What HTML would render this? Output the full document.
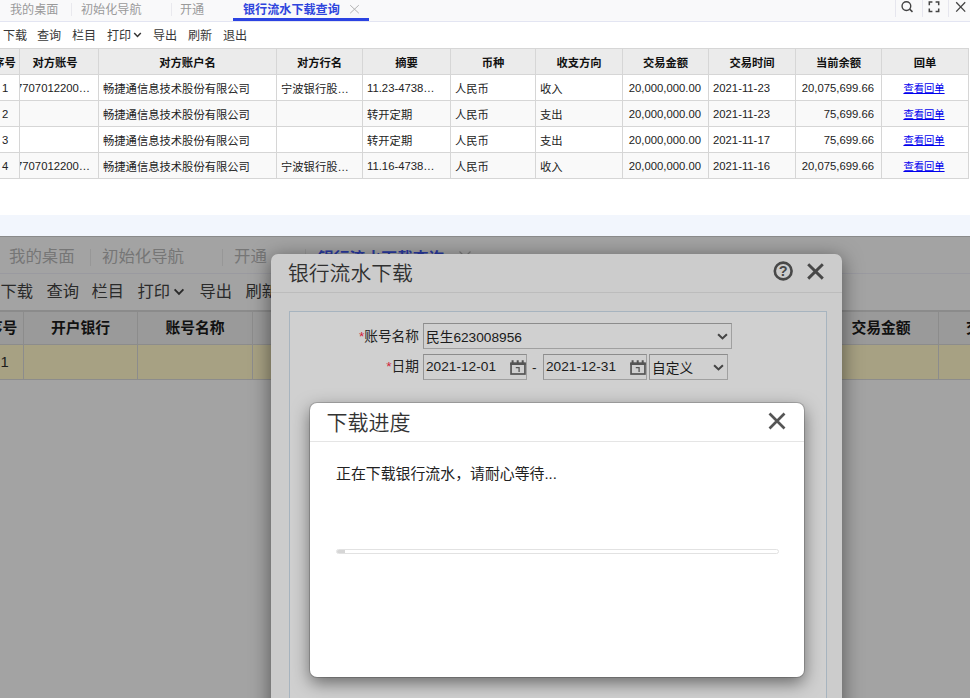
<!DOCTYPE html>
<html lang="zh-CN">
<head>
<meta charset="utf-8">
<title>银行流水下载查询</title>
<style>
*{box-sizing:border-box;margin:0;padding:0}
html,body{width:970px;height:698px;overflow:hidden;background:#fff}
body{position:relative;font-family:"Liberation Sans","Noto Sans CJK SC",sans-serif;color:#333}
.abs{position:absolute}
.t{position:absolute;white-space:nowrap;line-height:1}

/* ---------- top screenshot ---------- */
#top{position:absolute;left:0;top:0;width:970px;height:236px;background:#fff;overflow:hidden}
#top .tabbar{position:absolute;left:0;top:0;width:970px;height:22px;background:#f9f9fa;border-bottom:1px solid #e3e5f2}
#top .tab{position:absolute;top:4px;font-size:12.1px;line-height:12px;color:#9a9a9a;white-space:nowrap}
#top .tab.on{color:#2f45dd;font-weight:bold}
#top .sep{position:absolute;top:3px;width:1px;height:13px;background:#e9e9ee}
#top .uline{position:absolute;left:233px;top:18px;width:136px;height:3px;background:#2b43e2}
#top .isep{position:absolute;top:0;width:1px;height:17px;background:#e6e6ee}
#top .tool{position:absolute;top:30px;font-size:12.1px;line-height:12px;color:#383838;white-space:nowrap}
#top .band{position:absolute;left:0;top:215px;width:970px;height:21px;background:#f2f6fd}

table.g1{position:absolute;left:-1px;top:48px;width:969px;border-collapse:collapse;table-layout:fixed;font-size:11.3px;color:#222}
table.g1 th,table.g1 td{border:1px solid #d6d6d6;height:26px;padding:0 0 0 4px;overflow:hidden;white-space:nowrap;vertical-align:middle}
table.g1 th{background:#ebebeb;font-size:11.3px;font-weight:bold;color:#111;text-align:center;padding:0}
table.g1 td{padding-top:0}
table.g1 tr.alt td{background:#f9f9f9}
table.g1 td.r{text-align:right;padding:0 7px 0 0}
table.g1 td.c{text-align:center;padding:0 2px 0 0}
table.g1 td a{color:#0000ee;text-decoration:underline;font-size:10.3px}

/* ---------- bottom screenshot ---------- */
#bot{position:absolute;left:0;top:236px;width:970px;height:462px;background:#a3a3a3;overflow:hidden;border-top:1px solid #8a8a8a}
#bot .tabline{position:absolute;left:0;top:36px;width:970px;height:1px;background:#9a9aa0}
#bot .tab{position:absolute;top:12px;font-size:16.4px;line-height:16px;transform:scaleY(.94);transform-origin:50% 0;color:#767676;white-space:nowrap}
#bot .tab.on{color:#2a3aa0;font-weight:bold;font-size:15.8px;top:13.5px}
#bot .sep{position:absolute;top:12px;width:1px;height:17px;background:#979797}
#bot .tool{position:absolute;top:46px;font-size:16.3px;line-height:16px;margin-left:-0.5px;transform:scaleY(.95);transform-origin:50% 30%;color:#2a2a2a;white-space:nowrap}
table.g2{position:absolute;left:-1px;top:73px;width:1200px;border-collapse:collapse;table-layout:fixed;font-size:14.8px;color:#1c1c1c}
table.g2 th,table.g2 td{border:1px solid #8c8c8c;height:34px;padding:0 0 0 .5px;overflow:hidden;white-space:nowrap;vertical-align:middle}
table.g2 th{background:#9a9a9a;font-weight:bold;color:#111;text-align:center;padding:0 0 2px 0}
table.g2 td{background:#a7a183;height:35px}
table.g2 th{border-top:2px solid #8b8b8b;height:33px}

#dlg{position:absolute;left:271px;top:17px;width:571px;height:470px;background:#cccccc;border-radius:7px 7px 0 0;box-shadow:0 4px 20px rgba(0,0,0,.5)}
#dlg .ttl{position:absolute;left:17px;top:9px;font-size:20.8px;line-height:22px;color:#303030;font-weight:350;white-space:nowrap}
#dlg .hline{position:absolute;left:0;top:38px;width:571px;height:1px;background:#bcbcbc}
#dlg .panel{position:absolute;left:18px;top:57px;width:538px;height:420px;border:1px solid #a7b4bf;background:#d0d0d0}
#dlg .lbl{position:absolute;font-size:13.7px;line-height:14px;color:#222;white-space:nowrap;text-align:right;width:100px}
#dlg .lbl b{color:#d0223a;font-weight:normal}
#dlg .inp{position:absolute;height:26px;border:1px solid #a0a0a0;border-top-color:#8c8c8c;border-left-color:#949494;background:#d0d0d0;font-size:13.7px;line-height:24px;color:#1a1a1a;padding:0 0 0 2px;white-space:nowrap;overflow:hidden}

#pm{position:absolute;left:310px;top:166px;width:494px;height:274px;background:#fff;border-radius:7px;box-shadow:0 0 0 1px rgba(0,0,0,.17),0 6px 17px rgba(0,0,0,.5)}
#pm .ttl{position:absolute;left:16.5px;top:9px;font-size:21px;line-height:22px;color:#333;font-weight:350;white-space:nowrap}
#pm .hline{position:absolute;left:0;top:38px;width:494px;height:1px;background:#e5e5e5}
#pm .msg{position:absolute;left:26px;top:63px;font-size:14.9px;line-height:16px;color:#222;white-space:nowrap}
#pm .bar{position:absolute;left:26px;top:146px;width:443px;height:5px;border:1px solid #e2e2e2;border-radius:3px;background:#fff;overflow:hidden}
#pm .bar i{display:block;width:8px;height:100%;background:#d6d6d6}
.ov{display:block;margin:0 -20px;text-align:center}
table.g1 td.n{padding-left:2px}
</style>
</head>
<body>

<div id="top">
  <div class="tabbar">
    <span class="tab" style="left:10px">我的桌面</span>
    <i class="sep" style="left:71px"></i>
    <span class="tab" style="left:81px">初始化导航</span>
    <i class="sep" style="left:171px"></i>
    <span class="tab" style="left:180px">开通</span>
    <span class="tab on" style="left:243px">银行流水下载查询</span>
    <svg class="abs" style="left:349px;top:4px" width="11" height="11" viewBox="0 0 11 11"><path d="M1.2 1.2 L9.8 9.2 M9.8 1.2 L1.2 9.2" stroke="#b4b4b4" stroke-width="1" fill="none"/></svg>
    <i class="uline"></i>
    <i class="isep" style="left:895px"></i>
    <i class="isep" style="left:922px"></i>
    <i class="isep" style="left:948px"></i>
    <svg class="abs" style="left:899px;top:0" width="16" height="14" viewBox="0 0 16 14"><circle cx="7.4" cy="6.1" r="4.35" stroke="#444" stroke-width="1.4" fill="none"/><path d="M10.9 9.4 L13.5 11.9" stroke="#444" stroke-width="1.5" fill="none"/></svg>
    <svg class="abs" style="left:927px;top:0" width="14" height="14" viewBox="0 0 14 14"><path d="M2.3 5.2 V2 H5.4 M8.6 2 H11.7 V5.2 M11.7 8.4 V11.5 H8.6 M5.4 11.5 H2.3 V8.4" stroke="#444" stroke-width="1.5" fill="none"/></svg>
    <svg class="abs" style="left:954px;top:0" width="14" height="14" viewBox="0 0 14 14"><path d="M2.2 2.2 L11.2 11.6 M11.2 2.2 L2.2 11.6" stroke="#444" stroke-width="1.3" fill="none"/></svg>
  </div>

  <span class="tool" style="left:3px">下载</span>
  <span class="tool" style="left:37px">查询</span>
  <span class="tool" style="left:72px">栏目</span>
  <span class="tool" style="left:107px">打印</span>
  <svg class="abs" style="left:133px;top:31px" width="9" height="8" viewBox="0 0 9 8"><path d="M1.2 2 L4.5 5.4 L7.8 2" stroke="#333" stroke-width="1.5" fill="none"/></svg>
  <span class="tool" style="left:153px">导出</span>
  <span class="tool" style="left:188px">刷新</span>
  <span class="tool" style="left:223px">退出</span>

  <table class="g1">
    <colgroup>
      <col style="width:20px"><col style="width:79px"><col style="width:178px"><col style="width:86px"><col style="width:88px"><col style="width:85px"><col style="width:87px"><col style="width:86px"><col style="width:87px"><col style="width:86px"><col style="width:87px">
    </colgroup>
    <tr><th><span class="ov" style="margin:0 -16px 0 -26px">序号</span></th><th style="padding-right:8px">对方账号</th><th>对方账户名</th><th>对方行名</th><th>摘要</th><th>币种</th><th>收支方向</th><th>交易金额</th><th>交易时间</th><th>当前余额</th><th>回单</th></tr>
    <tr><td class="n">1</td><td style="padding-left:0"><span style="margin-left:-4px">7707012200…</span></td><td>畅捷通信息技术股份有限公司</td><td>宁波银行股…</td><td>11.23-4738…</td><td>人民币</td><td>收入</td><td class="r">20,000,000.00</td><td>2021-11-23</td><td class="r">20,075,699.66</td><td class="c"><a>查看回单</a></td></tr>
    <tr class="alt"><td class="n">2</td><td></td><td>畅捷通信息技术股份有限公司</td><td></td><td>转开定期</td><td>人民币</td><td>支出</td><td class="r">20,000,000.00</td><td>2021-11-23</td><td class="r">75,699.66</td><td class="c"><a>查看回单</a></td></tr>
    <tr><td class="n">3</td><td></td><td>畅捷通信息技术股份有限公司</td><td></td><td>转开定期</td><td>人民币</td><td>支出</td><td class="r">20,000,000.00</td><td>2021-11-17</td><td class="r">75,699.66</td><td class="c"><a>查看回单</a></td></tr>
    <tr class="alt"><td class="n">4</td><td style="padding-left:0"><span style="margin-left:-4px">7707012200…</span></td><td>畅捷通信息技术股份有限公司</td><td>宁波银行股…</td><td>11.16-4738…</td><td>人民币</td><td>收入</td><td class="r">20,000,000.00</td><td>2021-11-16</td><td class="r">20,075,699.66</td><td class="c"><a>查看回单</a></td></tr>
  </table>
  <div class="band"></div>
</div>


<div id="bot">
  <span class="tab" style="left:9px">我的桌面</span>
  <i class="sep" style="left:90px"></i>
  <span class="tab" style="left:102px">初始化导航</span>
  <i class="sep" style="left:222px"></i>
  <span class="tab" style="left:234px">开通</span>
  <i class="sep" style="left:305px"></i>
  <span class="tab on" style="left:318px">银行流水下载查询</span>
  <svg class="abs" style="left:458px;top:13px" width="14" height="14" viewBox="0 0 14 14"><path d="M1.5 1.5 L12.5 12.5 M12.5 1.5 L1.5 12.5" stroke="#7a7a7a" stroke-width="1.2" fill="none"/></svg>
  <i class="tabline"></i>

  <span class="tool" style="left:1px">下载</span>
  <span class="tool" style="left:47px">查询</span>
  <span class="tool" style="left:92px">栏目</span>
  <span class="tool" style="left:138px">打印</span>
  <svg class="abs" style="left:173px;top:50px" width="12" height="10" viewBox="0 0 12 10"><path d="M1.6 2.4 L6 6.8 L10.4 2.4" stroke="#2a2a2a" stroke-width="1.9" fill="none"/></svg>
  <span class="tool" style="left:200px">导出</span>
  <span class="tool" style="left:246px">刷新</span>

  <table class="g2">
    <colgroup><col style="width:24px"><col style="width:114px"><col style="width:115px"><col style="width:114px"><col style="width:114px"><col style="width:115px"><col style="width:114px"><col style="width:114px"><col style="width:115px"><col style="width:114px"><col></colgroup>
    <tr><th><span class="ov" style="margin:0 -20px 0 -38px">序号</span></th><th>开户银行</th><th>账号名称</th><th></th><th></th><th></th><th></th><th></th><th>交易金额</th><th>交易时间</th><th></th></tr>
    <tr><td>1</td><td></td><td></td><td></td><td></td><td></td><td></td><td></td><td></td><td></td><td></td></tr>
  </table>

  <div id="dlg">
    <span class="ttl">银行流水下载</span>
    <svg class="abs" style="left:501px;top:6px" width="22" height="22" viewBox="0 0 22 22"><circle cx="11.2" cy="11" r="8.4" stroke="#484848" stroke-width="2.6" fill="none"/><text x="11.2" y="16.2" text-anchor="middle" font-family="Liberation Sans,sans-serif" font-weight="bold" font-size="14.5" fill="#484848">?</text></svg>
    <svg class="abs" style="left:535px;top:8px" width="20" height="20" viewBox="0 0 20 20"><path d="M2.2 2.2 L16.8 16.6 M16.8 2.2 L2.2 16.6" stroke="#484848" stroke-width="2.9" fill="none"/></svg>
    <i class="hline"></i>
    <div class="panel"></div>
    <span class="lbl" style="left:48px;top:76px"><b>*</b>账号名称</span>
    <div class="inp" style="left:152px;top:69px;width:309px;padding-top:2px">民生623008956</div>
    <span class="lbl" style="left:48px;top:106px"><b>*</b>日期</span>
    <div class="inp" style="left:152px;top:100px;width:104px">2021-12-01</div>
    <span class="abs" style="left:261px;top:107px;font-size:13.7px;line-height:14px;color:#222">-</span>
    <div class="inp" style="left:272px;top:100px;width:104px">2021-12-31</div>
    <div class="inp" style="left:378px;top:100px;width:79px;padding-top:2px">自定义</div>
    <svg class="abs" style="left:239px;top:106px" width="16" height="15" viewBox="0 0 16 15"><path d="M2.6 0.2 V3 M7.7 0.2 V3 M12.7 0.2 V3" stroke="#555" stroke-width="2" fill="none"/><rect x="0.2" y="2.6" width="15.6" height="2.4" fill="#555"/><rect x="1.05" y="3.4" width="13.9" height="10.6" stroke="#555" stroke-width="1.7" fill="none"/><path d="M5.8 7.6 H9.1 V12" stroke="#555" stroke-width="1.3" fill="none"/></svg>
    <svg class="abs" style="left:359.4px;top:106px" width="16" height="15" viewBox="0 0 16 15"><path d="M2.6 0.2 V3 M7.7 0.2 V3 M12.7 0.2 V3" stroke="#555" stroke-width="2" fill="none"/><rect x="0.2" y="2.6" width="15.6" height="2.4" fill="#555"/><rect x="1.05" y="3.4" width="13.9" height="10.6" stroke="#555" stroke-width="1.7" fill="none"/><path d="M5.8 7.6 H9.1 V12" stroke="#555" stroke-width="1.3" fill="none"/></svg>
    <svg class="abs" style="left:445.6px;top:78.9px" width="11" height="8" viewBox="0 0 11 8"><path d="M1.1 1.3 L5.5 5.4 L9.9 1.3" stroke="#444" stroke-width="2.1" fill="none"/></svg>
    <svg class="abs" style="left:442.3px;top:110.3px" width="11" height="8" viewBox="0 0 11 8"><path d="M1.1 1.3 L5.5 5.4 L9.9 1.3" stroke="#444" stroke-width="2.1" fill="none"/></svg>
  </div>

  <div id="pm">
    <span class="ttl">下载进度</span>
    <svg class="abs" style="left:457px;top:8px" width="20" height="20" viewBox="0 0 20 20"><path d="M2.5 2.5 L17.5 17.5 M17.5 2.5 L2.5 17.5" stroke="#555" stroke-width="2.7" fill="none"/></svg>
    <i class="hline"></i>
    <span class="msg">正在下载银行流水，请耐心等待...</span>
    <div class="bar"><i></i></div>
  </div>
</div>


</body>
</html>
